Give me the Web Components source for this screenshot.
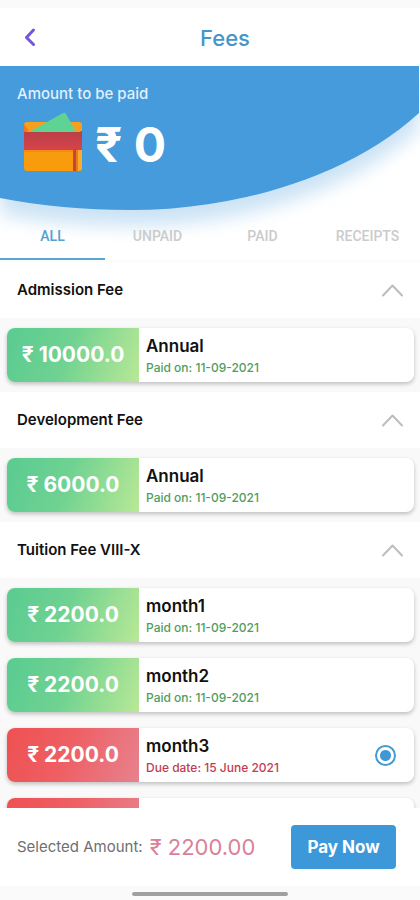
<!DOCTYPE html>
<html lang="en">
<head>
<meta charset="utf-8">
<meta name="viewport" content="width=device-width, initial-scale=1">
<title>Fees</title>
<style>
  html, body { margin: 0; height: 100%; }
  body {
    font-family: Inter, "Noto Sans", sans-serif;
    color: #111;
    background: #fafafa;
    --blue: #459bdb;
    --title-blue: #4595c9;
    --paid: #4f9d5c;
    --due: #c43c50;
  }
</style>
</head>
<body>
<fees-app></fees-app>

<template id="app-header">
  <style>
    :host { display: grid; grid-template-columns: 60px 1fr 60px; align-items: center; height: 58px; background: #fff; flex: none; }
    button { border: 0; background: none; padding: 0; height: 58px; display: grid; place-items: center; cursor: pointer; }
    h1 { margin: 0; padding: 2px 0 0 30px; font-size: 22px; line-height: 28px; font-weight: 500; text-align: center; color: var(--title-blue); }
    svg { display: block; }
  </style>
  <button type="button" aria-label="Back">
    <svg width="14" height="20" viewBox="0 0 14 20" fill="none" stroke="#7356db" stroke-width="3" stroke-linecap="round" stroke-linejoin="round"><path d="M10.500 3 3.500 10.500l7 7"/></svg>
  </button>
  <h1><slot></slot></h1>
</template>

<template id="amount-hero">
  <style>
    :host { display: grid; height: 146px; flex: none; }
    .shape, .content { grid-area: 1 / 1; }
    .shape { width: 100%; height: 146px; overflow: visible; filter: drop-shadow(0 16px 9px rgba(69, 155, 219, .28)); }
    .content { z-index: 1; padding: 18px 17px 0; color: #fff; }
    .label { margin: 0; font-size: 15px; line-height: 20px; font-weight: 500; color: #e2f0fb; }
    .amount { display: flex; align-items: flex-start; gap: 12px; padding: 7px 0 0 6px; }
    .amount strong { font-size: 48px; line-height: 68px; font-weight: 700; }
    .amount svg { flex: none; display: block; }
  </style>
  <svg class="shape" viewBox="0 0 420 146" preserveAspectRatio="none" aria-hidden="true">
    <path fill="#459bdb" d="M0 0H419V47C348 112 235 144 130 144 85 144 40 140 0 132Z"/>
  </svg>
  <div class="content">
    <p class="label"><slot name="label"></slot></p>
    <div class="amount">
      <svg width="60" height="60" viewBox="0 0 60 60" aria-hidden="true">
        <defs>
          <linearGradient id="o" x1="0" y1="0" x2="0" y2="1"><stop offset="0" stop-color="#f6a01d"/><stop offset="1" stop-color="#f99b0a"/></linearGradient>
          <linearGradient id="r" x1="0" y1="0" x2="0" y2="1"><stop offset="0" stop-color="#b93f45"/><stop offset="1" stop-color="#d8434c"/></linearGradient>
        </defs>
        <rect x="1" y="11" width="58" height="49" rx="3" fill="url(#o)"/>
        <path fill="#5fd394" d="M6 21 40 2q2-1 3 1l10 18z"/>
        <path fill="#f47b1c" d="M1 13v7q0 1 2 1l3-1z"/>
        <path fill="url(#r)" d="M1 20q0 1 2 1h53q2 0 2-1h1v19H1z"/>
        <path fill="#f58b12" d="M1 39h58v2H1z"/>
        <path fill="#c9433b" d="M50 41q0-4 2-4h1v23h-3z"/>
        <path fill="#ee7a1c" d="M53 39h2v21h-2z"/>
        <path fill="#f7ac2b" d="M55 39h4v18q0 3-4 3z"/>
      </svg>
      <strong><slot></slot></strong>
    </div>
  </div>
</template>

<template id="fee-tabs">
  <style>
    :host { display: grid; grid-auto-flow: column; grid-auto-columns: 1fr; height: 48px; flex: none; position: relative; z-index: 1; border-bottom: 2px solid #fcfcfc; }
    button { border: 0; border-bottom: 2px solid transparent; border-top: 2px solid transparent; background: none; padding: 0; font: 500 14px/20px Roboto, sans-serif; color: #cbcbcb; cursor: pointer; }
    button[aria-selected="true"] { color: #53a1ce; border-bottom-color: #5aa6d2; }
  </style>
</template>

<template id="fee-section">
  <style>
    :host { display: block; }
    h2 { margin: 0; }
    button { display: flex; align-items: center; justify-content: space-between; width: 100%; height: 56px; border: 0; padding: 0 16px 0 17px; background: #fff; color: #111; font: 600 15px/20px Inter, sans-serif; text-align: left; cursor: pointer; }
    .items { display: flex; flex-direction: column; gap: 16px; padding: 10px 6px 10px 7px; background: #f9f9f9; }
  </style>
  <h2><button type="button" aria-expanded="true">
    <span class="name"></span>
    <svg width="23" height="14" viewBox="0 0 23 14" fill="none" stroke="#bdbdbd" stroke-width="2" stroke-linecap="round" stroke-linejoin="round" aria-hidden="true"><path d="M2 12.500 11.500 2.500 21 12.500"/></svg>
  </button></h2>
  <div class="items"><slot></slot></div>
</template>

<template id="fee-card">
  <style>
    :host { display: grid; grid-template-columns: 132px 1fr auto; height: 54px; border-radius: 8px; overflow: hidden; background: #fff; box-shadow: 0 2px 4px rgba(0, 0, 0, .24); --tone: var(--paid); --fill: linear-gradient(110deg, #5acb91, #6fd291 45%, #b9e896); }
    :host([due]) { --tone: var(--due); --fill: linear-gradient(110deg, #ef5152, #ee5f63 45%, #e7828e); }
    .amount { display: grid; place-items: center; background: var(--fill); color: #fff; font-size: 21px; line-height: 24px; font-weight: 700; }
    .info { padding: 7px 0 0 7px; }
    .name, .date { display: block; margin: 0; }
    .name { font-size: 17px; line-height: 22px; font-weight: 600; color: #111; }
    .date { font-size: 12px; line-height: 22px; font-weight: 500; color: var(--tone); }
    input { appearance: none; align-self: center; width: 21px; height: 21px; margin: 0 18px 0 0; border: 2px solid #459bd0; border-radius: 50%; background: radial-gradient(circle, #3f97d4 5px, #fff 6px); }
  </style>
  <div class="amount"></div>
  <label class="info" for="pick"><span class="name"></span><span class="date"></span></label>
</template>

<template id="pay-bar">
  <style>
    :host { display: flex; align-items: center; height: 78px; padding: 0 24px 0 17px; background: #fff; flex: none; }
    .label { font-size: 15px; line-height: 20px; color: #6f6f6f; }
    output { margin-left: 7px; font-size: 22px; line-height: 24px; color: #dc7f98; }
    button { margin-left: auto; width: 105px; height: 44px; border: 0; border-radius: 4px; background: #3d98d9; color: #fff; font: 700 17px/20px Inter, sans-serif; padding: 0; cursor: pointer; }
  </style>
  <span class="label" id="l">Selected Amount:</span>
  <output aria-labelledby="l"><slot></slot></output>
  <button type="button">Pay Now</button>
</template>

<template id="fees-app">
  <style>
    :host { display: flex; flex-direction: column; height: 100vh; box-sizing: border-box; padding-top: 8px; background: #fafafa; }
    .top { background: #fff; flex: none; display: flex; flex-direction: column; }
    main { flex: 1; min-height: 0; overflow: hidden; }
    .home { flex: none; height: 14px; display: grid; place-items: center; padding-top: 2px; box-sizing: border-box; }
    .home i { width: 37%; height: 4px; border-radius: 2px; background: #a0a0a0; }
  </style>
  <div class="top">
    <app-header>Fees</app-header>
    <amount-hero><span slot="label">Amount to be paid</span>₹ 0</amount-hero>
    <fee-tabs items="ALL,UNPAID,PAID,RECEIPTS"></fee-tabs>
  </div>
  <main>
    <fee-section name="Admission Fee">
      <fee-card amount="₹ 10000.0" name="Annual" date="Paid on: 11-09-2021"></fee-card>
    </fee-section>
    <fee-section name="Development Fee">
      <fee-card amount="₹ 6000.0" name="Annual" date="Paid on: 11-09-2021"></fee-card>
    </fee-section>
    <fee-section name="Tuition Fee VIII-X">
      <fee-card amount="₹ 2200.0" name="month1" date="Paid on: 11-09-2021"></fee-card>
      <fee-card amount="₹ 2200.0" name="month2" date="Paid on: 11-09-2021"></fee-card>
      <fee-card due selectable amount="₹ 2200.0" name="month3" date="Due date: 15 June 2021"></fee-card>
      <fee-card due></fee-card>
    </fee-section>
  </main>
  <pay-bar>₹ 2200.00</pay-bar>
  <div class="home"><i></i></div>
</template>

<script>
  class Base extends HTMLElement {
    connectedCallback() {
      if (this.shadowRoot) return;
      const root = this.attachShadow({ mode: "open" });
      root.append(document.getElementById(this.localName).content.cloneNode(true));
      this.render(root);
    }
    render() {}
  }
  class AppHeader extends Base {}
  class AmountHero extends Base {}
  class PayBar extends Base {}
  class FeesApp extends Base {}

  class FeeTabs extends Base {
    render(root) {
      this.setAttribute("role", "tablist");
      this.getAttribute("items").split(",").forEach((text, i) => {
        const tab = document.createElement("button");
        tab.type = "button";
        tab.textContent = text;
        tab.setAttribute("role", "tab");
        tab.setAttribute("aria-selected", String(i === 0));
        tab.addEventListener("click", () => {
          root.querySelectorAll("button").forEach(b => b.setAttribute("aria-selected", String(b === tab)));
        });
        root.append(tab);
      });
    }
  }

  class FeeSection extends Base {
    render(root) {
      root.querySelector(".name").textContent = this.getAttribute("name");
      const button = root.querySelector("button");
      button.addEventListener("click", () => {
        const open = button.getAttribute("aria-expanded") !== "true";
        button.setAttribute("aria-expanded", String(open));
        root.querySelector(".items").style.display = open ? "" : "none";
      });
    }
  }

  class FeeCard extends Base {
    render(root) {
      for (const key of ["amount", "name", "date"]) {
        root.querySelector("." + key).textContent = this.getAttribute(key) || "";
      }
      if (this.hasAttribute("selectable")) {
        const radio = document.createElement("input");
        radio.type = "radio";
        radio.id = "pick";
        radio.checked = true;
        root.append(radio);
      }
    }
  }

  customElements.define("app-header", AppHeader);
  customElements.define("amount-hero", AmountHero);
  customElements.define("fee-tabs", FeeTabs);
  customElements.define("fee-section", FeeSection);
  customElements.define("fee-card", FeeCard);
  customElements.define("pay-bar", PayBar);
  customElements.define("fees-app", FeesApp);
</script>
</body>
</html>
